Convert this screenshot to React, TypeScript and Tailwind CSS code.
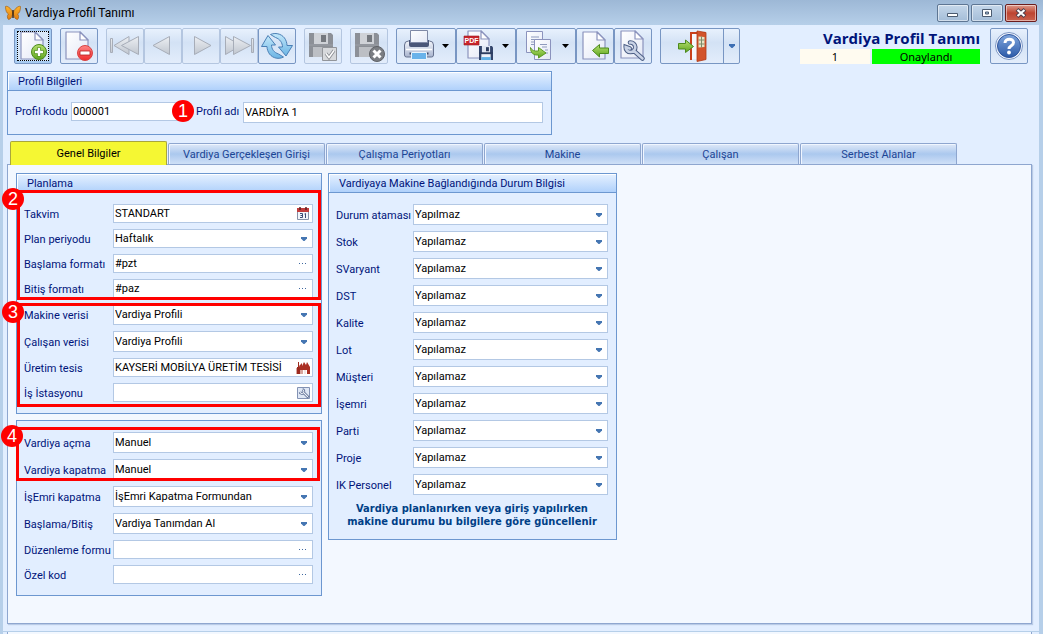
import { useState } from "react";
import type { ReactNode } from "react";
import clsx from "clsx";

/* ---------- shared icon parts ---------- */

function Page({ x = 4, y = 2, w = 22, h = 27 }: { x?: number; y?: number; w?: number; h?: number }) {
  return (
    <g stroke="#8b93bd" strokeWidth="1.2" strokeLinejoin="round">
      <path d={`M${x} ${y}h${w - 8}l8 8v${h - 8}h${-w}z`} fill="url(#paper)" />
      <path d={`M${x + w - 8} ${y}v8h8z`} fill="#fff" />
    </g>
  );
}

function Floppy({ x, y, s, dark }: { x: number; y: number; s: number; dark?: boolean }) {
  return (
    <g transform={`translate(${x} ${y}) scale(${s / 24})`}>
      <path d="M0 0h22l2 2v22H0z" fill={dark ? "#33456b" : "#8c9097"} />
      <path d="M5 0h14v11H5z" fill={dark ? "#dfe6f2" : "#cfd2d7"} />
      <path d="M12 2h5v7h-5z" fill={dark ? "#2b3a5c" : "#74787e"} />
      <path d="M4 14h16v10H4z" fill={dark ? "#eef3fa" : "#bcbfc4"} />
      {dark && <path d="M4 19h16v5H4z" fill="#5fb0e6" />}
      <path d="M0 12h24" stroke={dark ? "#1f2c4a" : "#9b9fa6"} />
    </g>
  );
}

function Icon({ children }: { children: ReactNode }) {
  return (
    <svg viewBox="0 0 32 32" className="size-8 shrink-0" aria-hidden="true">
      {children}
    </svg>
  );
}

function Defs() {
  return (
    <svg className="absolute size-0" aria-hidden="true">
      <defs>
        <linearGradient id="paper" x1="0" y1="0" x2="1" y2="1">
          <stop offset="0" stopColor="#ffffff" />
          <stop offset="1" stopColor="#e3e8f6" />
        </linearGradient>
        <linearGradient id="green" x1="0" y1="0" x2="0" y2="1">
          <stop offset="0" stopColor="#b5e070" />
          <stop offset="1" stopColor="#5fa51e" />
        </linearGradient>
        <linearGradient id="red" x1="0" y1="0" x2="0" y2="1">
          <stop offset="0" stopColor="#ff8585" />
          <stop offset="1" stopColor="#ee2a2a" />
        </linearGradient>
        <linearGradient id="grey" x1="0" y1="0" x2="0" y2="1">
          <stop offset="0" stopColor="#eceff3" />
          <stop offset="1" stopColor="#c0c6cf" />
        </linearGradient>
        <linearGradient id="sky" x1="0" y1="0" x2="0" y2="1">
          <stop offset="0" stopColor="#c3e8fa" />
          <stop offset="1" stopColor="#6bb4e4" />
        </linearGradient>
        <linearGradient id="steel" x1="0" y1="0" x2="0" y2="1">
          <stop offset="0" stopColor="#f2f5fb" />
          <stop offset="1" stopColor="#a9b5cf" />
        </linearGradient>
        <linearGradient id="help" x1="0" y1="0" x2="0" y2="1">
          <stop offset="0" stopColor="#7fa6dd" />
          <stop offset="1" stopColor="#2c5aa8" />
        </linearGradient>
        <linearGradient id="wing" x1="0" y1="0" x2="0" y2="1">
          <stop offset="0" stopColor="#ffb52e" />
          <stop offset="1" stopColor="#e07c10" />
        </linearGradient>
      </defs>
    </svg>
  );
}

const NewIcon = () => (
  <Icon>
    <Page />
    <circle cx="22" cy="22" r="7.5" fill="url(#green)" stroke="#4c8a1d" />
    <path d="M22 17.5v9M17.5 22h9" stroke="#4c8a1d" strokeWidth="4" />
    <path d="M22 18v8M18 22h8" stroke="#fff" strokeWidth="2.4" />
  </Icon>
);

const DeleteIcon = () => (
  <Icon>
    <Page x={3} />
    <circle cx="22" cy="23" r="7.5" fill="url(#red)" stroke="#d84444" />
    <path d="M17 21h10v4H17z" fill="#fff" stroke="#b71c1c" strokeWidth=".8" />
  </Icon>
);

const greyShape = { fill: "url(#grey)", stroke: "#a7adb8", strokeLinejoin: "round" as const };

const FirstIcon = () => (
  <Icon>
    <g {...greyShape}>
      <path d="M1.5 8.500h2v14h-2zM20 6.500v18L5 15.500z" />
      <path d="M29.500 6.500v18L12.500 15.500z" />
    </g>
  </Icon>
);

const PrevIcon = () => (
  <Icon>
    <path d="M22.500 6.500v18L6 15.500z" {...greyShape} />
  </Icon>
);

const NextIcon = () => (
  <Icon>
    <path d="M9.500 6.500v18L26 15.500z" {...greyShape} />
  </Icon>
);

const LastIcon = () => (
  <Icon>
    <g {...greyShape}>
      <path d="M28.500 8.500h2v14h-2zM2.500 6.500v18L18 15.500z" />
      <path d="M10.500 6.500v18L27.500 15.500z" />
    </g>
  </Icon>
);

const RefreshIcon = () => (
  <Icon>
    <g fill="url(#sky)" stroke="#4a7fb5" strokeLinejoin="round">
      <path d="M9.500 4.500C14 2.500 20 3.500 23.500 8c1.500 2 2.500 5 2.500 7.500h5.500L25 26l-7.500-9h4c0-4-2.500-8-7-9.500z" />
      <path d="M22.500 27C18 29.500 12 28.500 8.500 24c-1.500-2-2.500-5-2.500-7.500H.5L7 5.500l7.500 9.500h-4c0 4 2.500 7.500 7 9z" />
    </g>
  </Icon>
);

const SaveCheckIcon = () => (
  <Icon>
    <Floppy x={2} y={3} s={24} />
    <path d="M15.500 17.500h14v13h-14z" fill="#d7d9dc" stroke="#92959a" />
    <path d="M19 23.500l3 4 5-7" fill="none" stroke="#8d9095" strokeWidth="3.200" />
    <path d="M19 23.500l3 4 5-7" fill="none" stroke="#fff" strokeWidth="1.400" />
  </Icon>
);

const SaveCloseIcon = () => (
  <Icon>
    <Floppy x={2} y={3} s={24} />
    <circle cx="24" cy="24" r="7.500" fill="#7b7e83" stroke="#5f6267" />
    <path d="M20.500 20.500l7 7m0-7l-7 7" stroke="#fff" strokeWidth="3" />
  </Icon>
);

const PrinterIcon = () => (
  <Icon>
    <path d="M1.500 15q0-4 4-4h21q4 0 4 4v10q0 2-2 2h-25q-2 0-2-2z" fill="url(#steel)" stroke="#66728f" />
    <path d="M6 10h20v5q0 2-2 2H8q-2 0-2-2z" fill="#4a5678" />
    <path d="M7.500.500h17v12h-17z" fill="url(#paper)" stroke="#7f89a6" />
    <path d="M3 19.500h26" stroke="#fff" strokeWidth="1.500" />
    <path d="M6.500 22.500h19v2h-19z" fill="#3f4b6b" />
    <path d="M8.500 22.500h15v7h-15z" fill="#69b3ea" stroke="#e8f4fd" />
  </Icon>
);

const PdfIcon = () => (
  <Icon>
    <Page x={5} y={1} w={21} h={27} />
    <path d="M1 6h15v9H1z" fill="#c9252b" stroke="#9c181d" strokeWidth=".6" />
    <text x="8.500" y="13" textAnchor="middle" fill="#fff" fontSize="7" fontWeight="700" fontFamily="Liberation Sans, sans-serif">
      PDF
    </text>
    <Floppy x={16} y={16} s={14} dark />
  </Icon>
);

const CopyIcon = () => (
  <Icon>
    <path d="M3.500 1.500h16v21h-16z" fill="url(#paper)" stroke="#8b93bd" />
    <path d="M8 7h8M8 9.500h8M8 12h8M8 14.500h4" stroke="#8f9bbd" />
    <path d="M11.500 9.500h16v20h-16z" fill="url(#paper)" stroke="#8b93bd" />
    <path d="M17 14.500h7M19 17h5M22 20h3M22 23h3" stroke="#8f9bbd" />
    <path d="M7.500 17.500c1 3 4 4 8 3.500v-3.500l7.500 5.500-7.500 5v-3c-5 .500-8-2-8-7.500z" fill="url(#green)" stroke="#5c9a24" />
  </Icon>
);

const ImportIcon = () => (
  <Icon>
    <Page y={2} />
    <path d="M13.500 20.500l7-6v3.500h9v5.500h-9V27z" fill="url(#green)" stroke="#4c8a1d" />
  </Icon>
);

const WrenchIcon = () => (
  <Icon>
    <Page y={1} />
    <g fill="none" strokeLinecap="round">
      <path d="M13 12.500a4.800 4.800 0 1 1-4.300 4.500l4 1.500M16.500 20.500l9 8" stroke="#4d5f86" strokeWidth="4.600" />
      <path d="M13 12.500a4.800 4.800 0 1 1-4.300 4.500l4 1.500M16.500 20.500l9 8" stroke="#c9d3e6" strokeWidth="2.600" />
    </g>
  </Icon>
);

const DoorIcon = () => (
  <Icon>
    <path d="M15 30V3h14" fill="none" stroke="#c9401c" strokeWidth="2" />
    <path d="M16 4h6v25h-6z" fill="#f6f8fd" />
    <path d="M21 1l9 1.500v27L21 31.500z" fill="#d2532b" stroke="#b03a17" strokeWidth=".800" />
    <path d="M22.500 6.500l6 .500v10l-6 .500z" fill="#e8e4c4" />
    <path d="M25.500 6.500v11M22.500 10h6M22.500 14h6" stroke="#7c8a6a" />
    <path d="M2.500 13.500h7V10l8 6.500-8 6V19h-7z" fill="url(#green)" stroke="#4c8a1d" />
  </Icon>
);

const HelpIcon = () => (
  <Icon>
    <circle cx="16" cy="16" r="13.500" fill="#f4f8fe" stroke="#7c96c4" />
    <circle cx="16" cy="16" r="11.500" fill="url(#help)" stroke="#2f559c" />
    <path d="M12 13c0-5 8.500-5 8.500-.5 0 3.500-4.500 3-4.500 6.500" fill="none" stroke="#fff" strokeWidth="3" />
    <circle cx="16" cy="22.500" r="1.900" fill="#fff" />
  </Icon>
);

const Butterfly = () => (
  <svg viewBox="0 0 16 16" className="size-4" aria-hidden="true">
    <path d="M7.500 7C6 3 2 .5.500 1.500c0 4 1 6.500 3 7.500-1.500 1-1.500 4.500 0 5.500 2 0 3.500-2.500 4-5z" fill="url(#wing)" stroke="#9a560c" strokeWidth=".6" />
    <path d="M8.500 7c1.500-4 5.500-6.500 7-5.500 0 4-1 6.500-3 7.500 1.500 1 1.500 4.500 0 5.500-2 0-3.500-2.500-4-5z" fill="url(#wing)" stroke="#9a560c" strokeWidth=".6" />
    <path d="M8 5v8" stroke="#3c2208" strokeWidth="1.400" />
  </svg>
);

/* small icons inside the fields */

const CalendarIcon = () => (
  <svg viewBox="0 0 12 13" className="h-[13px] w-3" aria-hidden="true">
    <path d="M.5 3.500h11v9H.5z" fill="#f2f5fa" stroke="#8591a8" />
    <path d="M0 1h12v4H0z" fill="#c23b3b" />
    <path d="M3 0v3M9 0v3" stroke="#5b2020" strokeWidth="1.500" />
    <path d="M3 6.500h2.500v4H3M3.500 8.500h2M7.500 7l1-.500v4.500" fill="none" stroke="#3b4c74" />
  </svg>
);

const FactoryIcon = () => (
  <svg viewBox="0 0 14 14" className="size-3.5" aria-hidden="true">
    <path d="M1 6h3v7H1zM2 1h1v5H2z" fill="#9d2a1e" />
    <path d="M3 5l3-3v3l2-4 2 3 1-3 3 5v7h-3V9H7v4H4V8z" fill="#ab3023" />
    <path d="M0 7h1v6H0zM4 9h3v4H4z" fill="#d8a59e" />
    <path d="M8 9h2v4H8z" fill="#f4e6e4" />
  </svg>
);

const StationIcon = () => (
  <svg viewBox="0 0 13 12" className="h-3 w-[13px]" aria-hidden="true">
    <path d="M.5.500h12v11H.5z" fill="#dfe7f5" stroke="#8292b4" />
    <path d="M5.500 2.500a2 2 0 1 1-2.500 2.500M7 6l4.500 4.500" fill="none" stroke="#4d5f86" strokeWidth="2.600" />
    <path d="M5.500 2.500a2 2 0 1 1-2.500 2.500M7 6l4 4" fill="none" stroke="#eef2fa" strokeWidth="1.100" />
  </svg>
);

const DotsIcon = () => (
  <svg viewBox="0 0 8 1" className="h-px w-2" aria-hidden="true">
    <path d="M0 0h1v1H0zM3 0h1v1H3zM6 0h1v1H6z" fill="#3f689f" />
  </svg>
);

const Caret = ({ className }: { className?: string }) => (
  <svg viewBox="0 0 7 4" className={clsx("h-1 w-[7px] shrink-0", className)} aria-hidden="true">
    <path d="M0 0h7L3.500 4z" fill="currentColor" />
  </svg>
);

const SmallCaret = ({ className }: { className?: string }) => (
  <svg viewBox="0 0 6 4" className={clsx("h-1 w-1.5 shrink-0", className)} aria-hidden="true">
    <path d="M0 0h6v1.500L3.500 4h-1L0 1.500z" fill="currentColor" />
  </svg>
);

/* ---------- toolbar ---------- */

type ToolProps = {
  label: string;
  children: ReactNode;
  disabled?: boolean;
  active?: boolean;
  menu?: boolean;
};

function Tool({ label, children, disabled, active, menu }: ToolProps) {
  return (
    <button
      type="button"
      title={label}
      aria-label={label}
      disabled={disabled}
      className={clsx(
        "flex h-9 items-center rounded-[2px] border",
        menu ? "w-15 gap-[7px] pl-1.5" : "w-[38px] justify-center",
        disabled ? "border-[#b4c6e0]" : "border-[#7896c3]",
        active
          ? "bg-linear-to-b from-[#dbe9fa] to-[#d3e4f8] shadow-[inset_0_0_0_2px_#a9cdf3] outline-1 -outline-offset-4 outline-dotted outline-black"
          : "bg-linear-to-b from-[#e8f1fd] from-0% via-[#d3e2f5] via-40% to-[#e3edfb]"
      )}
    >
      {children}
      {menu && <Caret className="text-black" />}
    </button>
  );
}

function Toolbar() {
  return (
    <header className="flex items-start px-[11px] pt-[3px]">
      <div className="flex gap-2">
        <Tool label="Yeni" active><NewIcon /></Tool>
        <Tool label="Sil"><DeleteIcon /></Tool>
        <div className="flex">
          <Tool label="İlk kayıt" disabled><FirstIcon /></Tool>
          <Tool label="Önceki kayıt" disabled><PrevIcon /></Tool>
          <Tool label="Sonraki kayıt" disabled><NextIcon /></Tool>
          <Tool label="Son kayıt" disabled><LastIcon /></Tool>
          <Tool label="Yenile"><RefreshIcon /></Tool>
        </div>
        <Tool label="Kaydet" disabled><SaveCheckIcon /></Tool>
        <Tool label="Kaydet ve kapat" disabled><SaveCloseIcon /></Tool>
        <div className="flex">
          <Tool label="Yazdır" menu><PrinterIcon /></Tool>
          <Tool label="PDF olarak kaydet" menu><PdfIcon /></Tool>
          <Tool label="Kopyala" menu><CopyIcon /></Tool>
          <Tool label="İçeri al"><ImportIcon /></Tool>
          <Tool label="Ayarlar"><WrenchIcon /></Tool>
        </div>
        <div className="flex h-9 rounded-[2px] border border-[#7896c3] bg-linear-to-b from-[#e8f1fd] from-0% via-[#d3e2f5] via-40% to-[#e3edfb]">
          <button type="button" aria-label="Çıkış" className="flex w-[63px] items-center justify-center border-r border-[#7896c3]">
            <DoorIcon />
          </button>
          <button type="button" aria-label="Çıkış seçenekleri" className="flex w-[15px] items-center justify-center text-[#3d6fb4]">
            <SmallCaret />
          </button>
        </div>
      </div>

      <div className="ml-auto flex gap-2.5">
        <div className="flex h-9 flex-col justify-between">
          <h1 className="text-right font-['Open_Sans',sans-serif] text-[15px] leading-5 font-bold text-[#00147a]">
            Vardiya Profil Tanımı
          </h1>
          <div className="flex gap-0.5 text-center font-['Noto_Sans',sans-serif] leading-[15px] text-black">
            <span className="w-[70px] bg-[#fffbf0]">1</span>
            <span className="w-[108px] bg-[#00ff00]">Onaylandı</span>
          </div>
        </div>
        <Tool label="Yardım"><HelpIcon /></Tool>
      </div>
    </header>
  );
}

/* ---------- title bar ---------- */

function TitleBar() {
  const button = "flex h-[18px] w-8 items-center justify-center rounded-[2px] border border-[#5e7693] shadow-[inset_0_0_0_1px_rgba(255,255,255,0.5)]";
  return (
    <div className="flex h-[25px] items-center bg-linear-to-b from-[#9db8d6] to-[#b6cfe9] pr-1.5 pl-[5px]">
      <Butterfly />
      <span className="ml-1 pt-px text-[12px] text-black">Vardiya Profil Tanımı</span>
      <div className="ml-auto flex gap-0.5">
        <button type="button" aria-label="Simge durumuna küçült" className={clsx(button, "bg-linear-to-b from-[#c5d7ea] to-[#a4bdd8]")}>
          <svg viewBox="0 0 12 10" className="h-2.5 w-3" aria-hidden="true">
            <path d="M.5 5.500h10v3H.5z" fill="#fff" stroke="#4b5b70" />
          </svg>
        </button>
        <button type="button" aria-label="Ekranı kapla" className={clsx(button, "bg-linear-to-b from-[#c5d7ea] to-[#a4bdd8]")}>
          <svg viewBox="0 0 12 10" className="h-2.5 w-3" aria-hidden="true">
            <path d="M1.500 1.500h9v7h-9z" fill="#fff" stroke="#4b5b70" />
            <path d="M4.500 4h3v2h-3z" fill="#a4bdd8" stroke="#4b5b70" />
          </svg>
        </button>
        <button type="button" aria-label="Kapat" className={clsx(button, "border-[#6b1d1d] bg-linear-to-b from-[#dc9a8d] via-[#bd4431] to-[#c9624f]")}>
          <svg viewBox="0 0 12 10" className="h-2.5 w-3" aria-hidden="true">
            <path d="M2 1.500l8 7m0-7l-8 7" stroke="#4c3d4a" strokeWidth="4" />
            <path d="M2.500 2l7 6m0-6l-7 6" stroke="#fff" strokeWidth="2.200" />
          </svg>
        </button>
      </div>
    </div>
  );
}

/* ---------- form ---------- */

type Kind = "select" | "dots" | "calendar" | "factory" | "station";

type FieldDef = { id: string; label: string; value: string; kind: Kind; tall?: boolean };

const box = "border border-[#b3c8e4] bg-white text-black outline-none";

const lookupIcons = {
  dots: <DotsIcon />,
  calendar: <CalendarIcon />,
  factory: <FactoryIcon />,
  station: <StationIcon />,
};

function Field({ field, wide }: { field: FieldDef; wide?: boolean }) {
  const { id, label, value, kind, tall } = field;
  return (
    <div className={clsx("grid items-center", wide ? "grid-cols-[77px_1fr]" : "grid-cols-[89px_1fr]")}>
      <label htmlFor={id} className="pt-0.5 leading-4 whitespace-nowrap">{label}</label>
      {kind === "select" ? (
        <div className="relative">
          <select
            id={id}
            defaultValue={value}
            className={clsx(box, "block w-full appearance-none pl-px", tall ? "h-[21px] pt-0.5" : "h-[19px] pt-px")}
          >
            <option>{value}</option>
          </select>
          <SmallCaret className="pointer-events-none absolute top-1/2 right-1.5 -translate-y-1/2 text-[#4576b2]" />
        </div>
      ) : (
        <div className={clsx(box, "flex h-[19px]")}>
          <input id={id} defaultValue={value} className="min-w-0 flex-1 pt-px pl-px outline-none" />
          <button type="button" aria-label={`${label} seç`} className="flex w-[18px] items-center justify-center">
            {lookupIcons[kind]}
          </button>
        </div>
      )}
    </div>
  );
}

function Group({ title, className, children }: { title?: string; className?: string; children: ReactNode }) {
  return (
    <section className={clsx("border border-[#6c97d0] bg-[#e2eeff]", className)}>
      {title && (
        <h2 className="h-[19px] border-b border-[#6c97d0] bg-linear-to-b from-[#e6f1ff] to-[#b0d1fb] pl-2.5 leading-5 shadow-[inset_1px_1px_0_#fff]">
          {title}
        </h2>
      )}
      <div className="py-[11px] pr-2 pl-[7px]">{children}</div>
    </section>
  );
}

function Badge({ children, className }: { children: ReactNode; className: string }) {
  return (
    <span className={clsx("absolute z-10 flex size-[22px] items-center justify-center rounded-full bg-[#ff0000] font-['Liberation_Sans',sans-serif] text-[18px] leading-none text-white", className)}>
      {children}
    </span>
  );
}

// Rows that belong to one numbered step, framed in red
function Step({ no, fields, frame }: { no: number; fields: FieldDef[]; frame: string }) {
  return (
    <div className="relative grid gap-1.5">
      {fields.map((field) => (
        <Field key={field.id} field={field} />
      ))}
      <div className={clsx("pointer-events-none absolute border-3 border-[#ff0000]", frame)}>
        <Badge className="-top-[5px] -left-[18px]">{no}</Badge>
      </div>
    </div>
  );
}

const periodFields: FieldDef[] = [
  { id: "takvim", label: "Takvim", value: "STANDART", kind: "calendar" },
  { id: "plan-periyodu", label: "Plan periyodu", value: "Haftalık", kind: "select" },
  { id: "baslama-formati", label: "Başlama formatı", value: "#pzt", kind: "dots" },
  { id: "bitis-formati", label: "Bitiş formatı", value: "#paz", kind: "dots" },
];

const sourceFields: FieldDef[] = [
  { id: "makine-verisi", label: "Makine verisi", value: "Vardiya Profili", kind: "select", tall: true },
  { id: "calisan-verisi", label: "Çalışan verisi", value: "Vardiya Profili", kind: "select", tall: true },
  { id: "uretim-tesis", label: "Üretim tesis", value: "KAYSERİ MOBİLYA ÜRETİM TESİSİ", kind: "factory" },
  { id: "is-istasyonu", label: "İş İstasyonu", value: "", kind: "station" },
];

const shiftFields: FieldDef[] = [
  { id: "vardiya-acma", label: "Vardiya açma", value: "Manuel", kind: "select", tall: true },
  { id: "vardiya-kapatma", label: "Vardiya kapatma", value: "Manuel", kind: "select", tall: true },
];

const otherFields: FieldDef[] = [
  { id: "isemri-kapatma", label: "İşEmri kapatma", value: "İşEmri Kapatma Formundan", kind: "select", tall: true },
  { id: "baslama-bitis", label: "Başlama/Bitiş", value: "Vardiya Tanımdan Al", kind: "select", tall: true },
  { id: "duzenleme-formu", label: "Düzenleme formu", value: "", kind: "dots" },
  { id: "ozel-kod", label: "Özel kod", value: "", kind: "dots" },
];

const statusLabels = ["Durum ataması", "Stok", "SVaryant", "DST", "Kalite", "Lot", "Müşteri", "İşemri", "Parti", "Proje", "IK Personel"];

const tabs = ["Genel Bilgiler", "Vardiya Gerçekleşen Girişi", "Çalışma Periyotları", "Makine", "Çalışan", "Serbest Alanlar"];

function ProfileGroup() {
  return (
    <Group title="Profil Bilgileri" className="w-[545px]">
      <div className="relative flex items-start">
        <label htmlFor="profil-kodu" className="w-14 leading-5 whitespace-nowrap">Profil kodu</label>
        <input id="profil-kodu" defaultValue="000001" className={clsx(box, "h-[19px] w-[118px] pl-px")} />
        <label htmlFor="profil-adi" className="ml-[7px] w-[47px] leading-5 whitespace-nowrap">Profil adı</label>
        <input id="profil-adi" defaultValue="VARDİYA 1" className={clsx(box, "h-[21px] min-w-0 flex-1 pl-px")} />
        <Badge className="-top-0.5 left-[157px]">1</Badge>
      </div>
    </Group>
  );
}

function GeneralTab() {
  return (
    <div className="flex items-start gap-1.5 p-2">
      <div className="grid w-[306px] gap-1.5">
        <Group title="Planlama">
          <div className="grid gap-1.5">
            <Step no={2} fields={periodFields} frame="-top-3.5 -bottom-0.5 -left-[7px] -right-2" />
            <Step no={3} fields={sourceFields} frame="-top-px -bottom-[5px] -left-[7px] -right-2" />
          </div>
        </Group>
        <Group>
          <div className="grid gap-1.5">
            <Step no={4} fields={shiftFields} frame="-top-[5px] -bottom-px -left-2 -right-[7px]" />
            {otherFields.map((field) => (
              <Field key={field.id} field={field} />
            ))}
          </div>
        </Group>
      </div>

      <Group title="Vardiyaya Makine Bağlandığında Durum Bilgisi" className="w-[289px]">
        <div className="grid gap-1.5">
          {statusLabels.map((label, i) => (
            <Field
              key={label}
              wide
              field={{ id: `durum-${i}`, label, value: i === 0 ? "Yapılmaz" : "Yapılamaz", kind: "select", tall: true }}
            />
          ))}
        </div>
        <p className="mt-[7px] text-center font-['DejaVu_Sans_Condensed','DejaVu_Sans',sans-serif] leading-[13px] font-bold text-[#003f87]">
          Vardiya planlanırken veya giriş yapılırken
          <br />
          makine durumu bu bilgilere göre güncellenir
        </p>
      </Group>
    </div>
  );
}

export default function App() {
  const [tab, setTab] = useState(0);

  return (
    <div className="flex min-h-screen flex-col bg-[#b6cfe9] font-['Roboto',sans-serif] text-[11px] text-[#00147a]">
      <Defs />
      <TitleBar />
      <div className="mr-1 ml-[3px] flex flex-1 flex-col bg-[#e2eeff]">
        <Toolbar />
        <main className="flex flex-1 flex-col pt-[7px] pr-[7px] pl-1">
          <ProfileGroup />

          <div role="tablist" className="mt-1.5 flex items-end gap-px pl-[3px]">
            {tabs.map((name, i) => (
              <button
                key={name}
                type="button"
                role="tab"
                aria-selected={tab === i}
                onClick={() => setTab(i)}
                className={clsx(
                  "w-[157px] rounded-t-[2px] border border-b-0 pt-0.5",
                  tab === i
                    ? "relative -mb-px h-6 border-[#a9a63c] bg-[#f5f733] text-black"
                    : "h-[21px] border-[#8ea6cf] bg-linear-to-b from-[#dfe9f8] from-0% via-[#abc8ee] via-50% to-[#cfe0f7] text-[#1c4595] shadow-[inset_1px_1px_0_#f0f6ff]"
                )}
              >
                {name}
              </button>
            ))}
          </div>
          <div role="tabpanel" className="flex-1 border border-[#8ea6cf] bg-[#f3f8ff] shadow-[1px_1px_1px_#b9cbe6]">
            {tab === 0 && <GeneralTab />}
          </div>
        </main>
        <footer className="mt-[7px] border-t border-[#b6cfe9] pr-[7px] pl-1">
          <div className="h-0.5 border-x border-[#8ea6cf] bg-[#f3f8ff]" />
        </footer>
      </div>
    </div>
  );
}
